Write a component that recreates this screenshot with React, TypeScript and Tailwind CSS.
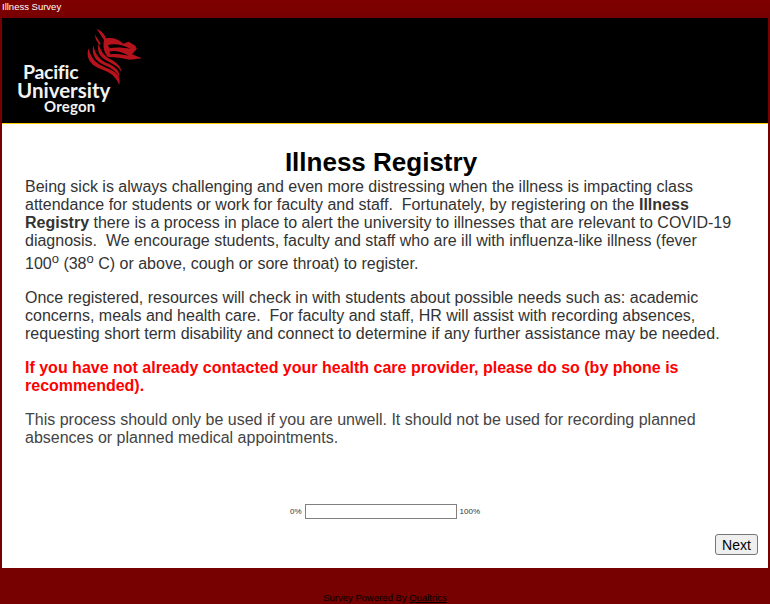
const SUP = "o";

function DragonMark() {
  return (
    <svg width="65" height="65" viewBox="0 0 195 195" className="absolute left-[78px] top-[7px]" fill="#b5121b">
      {/* head */}
      <path d="M50 12 C62 16 72 24 78 40 C96 36 116 42 130 56 L146 50 L166 62 L170 72 L156 88 L186 100 L150 104 C128 100 104 96 84 96 C72 84 68 64 72 46 C68 38 62 30 50 12 Z" />
      <path d="M84 60 C104 54 130 60 152 72 C132 68 106 66 88 70 Z M88 80 C108 74 130 82 146 92 C126 88 106 86 92 88 Z" fill="#000" />
      <path d="M44 28 L62 56 L58 60 L48 44 Z" />
      {/* neck strands */}
      <path d="M56 56 C50 76 58 94 78 106 C96 116 116 124 124 142 C124 122 106 110 90 102 C72 92 62 78 56 56 Z" />
      <path d="M40 62 C34 84 44 106 68 118 C88 128 108 134 118 160 C122 134 100 122 80 114 C60 104 46 88 40 62 Z" />
      <path d="M26 70 C16 96 30 118 56 130 C78 138 104 146 118 180 C124 150 104 138 78 128 C52 118 32 102 26 70 Z" />
    </svg>
  );
}

function Logo() {
  return (
    <div className="relative h-[105px] w-[200px] bg-black font-['Lato',sans-serif] font-bold text-[#f2f2f2]">
      <DragonMark />
      <span className="absolute left-[21px] top-[45px] text-[19.5px] leading-[18px] tracking-[-0.3px]">Pacific</span>
      <span className="absolute left-[15px] top-[63px] text-[20.5px] leading-[18px]">University</span>
      <span className="absolute left-[42px] top-[81px] text-[15px] leading-[14px] tracking-[0.2px]">Oregon</span>
    </div>
  );
}

export default function App() {
  return (
    <div className="flex h-[604px] w-[770px] flex-col overflow-hidden bg-[#770000] font-['Liberation_Sans',Arial,sans-serif]">
      <div className="h-[18px] bg-gradient-to-b from-[#800000] to-[#770000] pl-[2px] text-[9.5px] leading-[14px] text-white">Illness Survey</div>
      <div className="mx-[2px] flex h-[550px] flex-col bg-white">
        <div className="h-[105px] bg-black">
          <Logo />
        </div>
        <div className="h-px bg-[#ffcc00]" />
        <div className="flex flex-1 flex-col px-[23px] text-[16px] leading-[18px] text-[#333333]">
          <h1 className="mt-[25px] pr-[8px] text-center text-[26px] font-bold leading-[27px] text-black">Illness Registry</h1>
          <p className="mt-[2px]">
            Being sick is always challenging and even more distressing when the illness is impacting class attendance for students or work for faculty and staff.&nbsp; Fortunately, by registering on the <b>Illness Registry</b> there is a process in place to alert the university to illnesses that are relevant to COVID-19 diagnosis.&nbsp; We encourage students, faculty and staff who are ill with influenza-like illness (fever
            <span className="mt-[5px] block">
              100<sup className="text-[13px]">{SUP}</sup> (38<sup className="text-[13px]">{SUP}</sup> C) or above, cough or sore throat) to register.
            </span>
          </p>
          <p className="mt-[16px]">
            Once registered, resources will check in with students about possible needs such as: academic concerns, meals and health care.&nbsp; For faculty and staff, HR will assist with recording absences, requesting short term disability and connect to determine if any further assistance may be needed.
          </p>
          <p className="mt-[16px] font-bold text-[#ff0000]">
            If you have not already contacted your health care provider, please do so (by phone is recommended).
          </p>
          <p className="mt-[16px] text-[#444444]">
            This process should only be used if you are unwell. It should not be used for recording planned absences or planned medical appointments.
          </p>
          <div className="mt-[57px] flex items-center justify-center gap-[3px] text-[8px] leading-[10px] text-[#333333]">
            <span>0%</span>
            <div className="h-[15px] w-[152px] border border-[#808080] bg-white" />
            <span>100%</span>
          </div>
          <div className="mt-[15px] flex justify-end">
            <button className="-mr-[13px] h-[21px] w-[43px] rounded-[3px] border border-[#767676] bg-[#efefef] text-[14px] text-black">Next</button>
          </div>
        </div>
      </div>
      <div className="mt-[24px] text-center text-[9.5px] leading-[12px] text-black">
        Survey Powered By <span className="underline">Qualtrics</span>
      </div>
    </div>
  );
}
